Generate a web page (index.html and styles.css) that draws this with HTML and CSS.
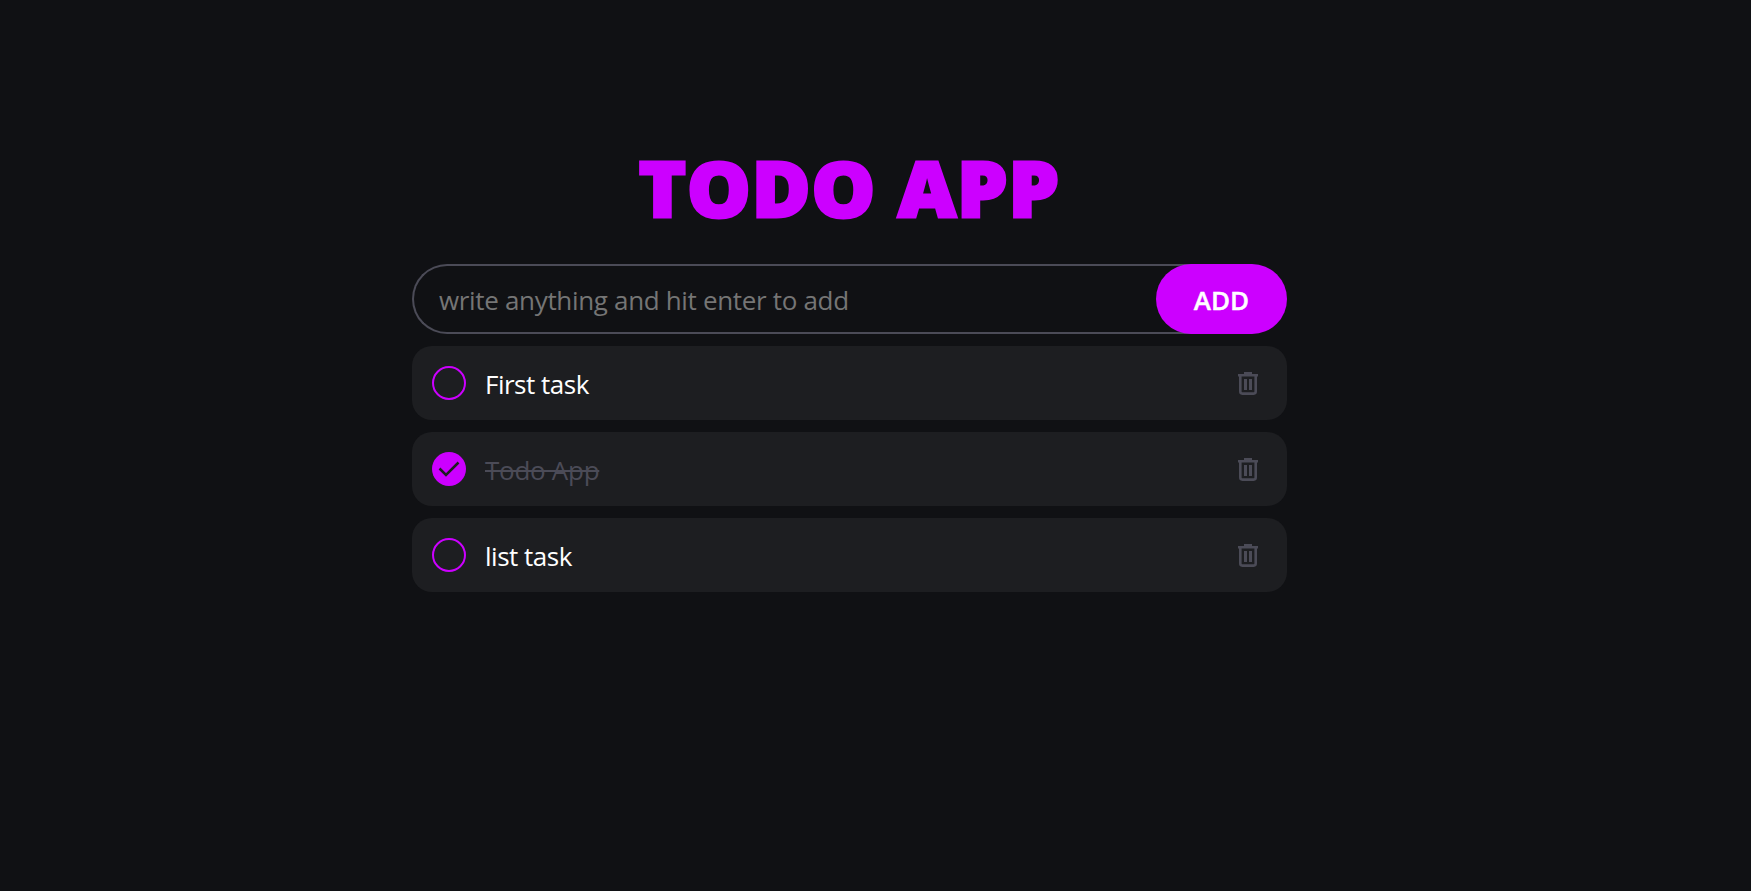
FILE: index.html
```html
<!DOCTYPE html>
<html lang="en">
<head>
<meta charset="utf-8">
<title>Todo App</title>
<link rel="stylesheet" href="styles.css">
</head>
<body>
<main class="app">
  <h1 class="title"><span>TODO APP</span></h1>
  <form class="entry">
    <input class="entry-input" type="text" placeholder="write anything and hit enter to add">
    <button class="entry-add" type="button">ADD</button>
  </form>
  <ul class="tasks">
    <li class="task">
      <span class="check"></span>
      <span class="label">First task</span>
      <svg class="trash" viewBox="0 0 20 23"><path d="M6 0h8v2h6v2.500H0V2h6z"/><path class="bin" d="M2.300 4v15.600q0 2 2 2h11.400q2 0 2-2V4"/><path d="M6 7h3v11H6zM11 7h3v11h-3z"/></svg>
    </li>
    <li class="task">
      <span class="check checked"><svg viewBox="0 0 34 34"><path d="M7.500 16.500l6.500 6.500L26.500 10.500"/></svg></span>
      <span class="label label-done">Todo App</span>
      <svg class="trash" viewBox="0 0 20 23"><path d="M6 0h8v2h6v2.500H0V2h6z"/><path class="bin" d="M2.300 4v15.600q0 2 2 2h11.400q2 0 2-2V4"/><path d="M6 7h3v11H6zM11 7h3v11h-3z"/></svg>
    </li>
    <li class="task">
      <span class="check"></span>
      <span class="label">list task</span>
      <svg class="trash" viewBox="0 0 20 23"><path d="M6 0h8v2h6v2.500H0V2h6z"/><path class="bin" d="M2.300 4v15.600q0 2 2 2h11.400q2 0 2-2V4"/><path d="M6 7h3v11H6zM11 7h3v11h-3z"/></svg>
    </li>
  </ul>
</main>
</body>
</html>
```
FILE: styles.css
```css
* { box-sizing: border-box; }
body {
  margin: 0;
  min-height: 100vh;
  background: #101114;
  color: #fff;
  font-family: "Open Sans", "Noto Sans", sans-serif;
}
.app {
  width: 875px;
  margin-left: 412px;
  padding-top: 134px;
}
.title {
  margin: 0 0 22px;
  height: 108px;
  line-height: 108px;
  text-align: center;
  font-size: 75.500px;
  font-weight: 800;
  letter-spacing: 0.900px;
  color: #cc00ff;
  -webkit-text-stroke: 3px #cc00ff;
  white-space: nowrap;
  transform: scaleX(1.06);
}
.entry {
  display: flex;
  height: 70px;
  margin: 0 0 12px;
}
.entry-input {
  flex: 1;
  min-width: 0;
  height: 70px;
  margin-right: -50px;
  padding: 1px 60px 0 25px;
  border: 2px solid #4b4b57;
  border-right: 0;
  border-radius: 35px 0 0 35px;
  outline: 0;
  background: transparent;
  color: #fff;
  font: 400 26px "Open Sans", sans-serif;
  letter-spacing: -0.330px;
}
.entry-input::placeholder { color: #757575; opacity: 1; }
.entry-add {
  position: relative;
  width: 131px;
  height: 70px;
  padding: 1px 0 0;
  border: 0;
  border-radius: 35px;
  background: #cc00ff;
  color: #fff;
  font: 600 26px "Open Sans", sans-serif;
  -webkit-text-stroke: 0.400px #fff;
}
.tasks {
  display: flex;
  flex-direction: column;
  gap: 12px;
  margin: 0;
  padding: 0;
  list-style: none;
}
.task {
  display: flex;
  align-items: center;
  height: 74px;
  padding: 0 29px 0 20px;
  border-radius: 20px;
  background: #1d1e21;
}
.check {
  width: 34px;
  height: 34px;
  border: 2px solid #cc00ff;
  border-radius: 50%;
}
.checked { border: 0; background: #cc00ff; }
.checked svg { display: block; fill: none; stroke: #1d1e21; stroke-width: 2.500; }
.label {
  margin-left: 19px;
  padding-top: 1px;
  font-size: 26px;
  line-height: 36px;
  letter-spacing: -0.500px;
}
.label-done { letter-spacing: -0.280px; color: #4b4b57; text-decoration: line-through; text-decoration-thickness: 2px; }
.trash { width: 20px; height: 23px; margin-left: auto; fill: #4b4b57; }
.bin { fill: none; stroke: #4b4b57; stroke-width: 2.600; }
```
